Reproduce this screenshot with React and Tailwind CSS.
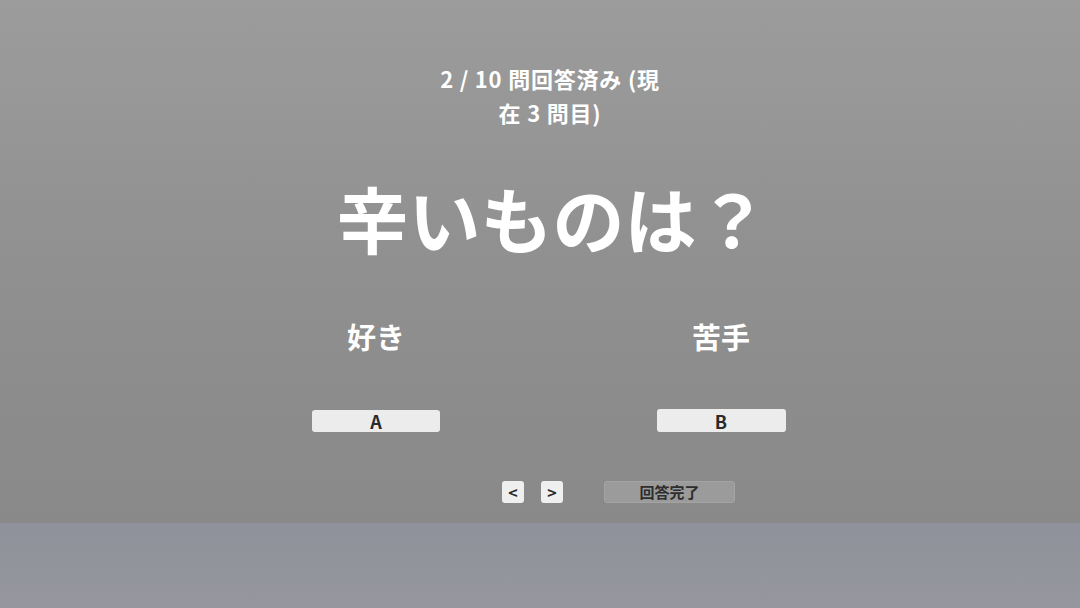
export default function App() {
  const font = { fontFamily: '"Noto Sans CJK JP", "Noto Sans", sans-serif' };
  return (
    <div className="w-[1080px] h-[608px] flex flex-col overflow-hidden" style={font}>
      <div className="h-[523px] bg-gradient-to-b from-[#9c9c9c] via-[#909090] to-[#898989] flex flex-col">
        <div className="pt-[61px] flex justify-center">
          <div className="ml-[20px] w-[234px] text-center text-white font-bold text-[22px] leading-[34px] tracking-[0.8px]">
            2 / 10 問回答済み (現在 3 問目)
          </div>
        </div>
        <div className="mt-[46px] flex justify-center">
          <div className="text-white font-bold text-[72px] leading-[84px] pl-[25px]">辛いものは？</div>
        </div>
        <div className="mt-[57px] flex pl-[306px]">
          <div className="w-[140px] flex flex-col items-center">
            <div className="text-white font-bold text-[29px] leading-[40px]">好き</div>
            <button className="mt-[54px] w-[128px] h-[22px] rounded-[3px] bg-[#ececec] text-[#2a2a2a] font-bold text-[18px] leading-[22px] flex items-center justify-center">A</button>
          </div>
          <div className="w-[140px] flex flex-col items-center ml-[205px]">
            <div className="text-white font-bold text-[29px] leading-[40px]">苦手</div>
            <button className="mt-[53px] w-[129px] h-[23px] rounded-[3px] bg-[#ececec] text-[#2a2a2a] font-bold text-[18px] leading-[22px] flex items-center justify-center">B</button>
          </div>
        </div>
        <div className="mt-[49px] flex pl-[502px] items-center">
          <button className="w-[22px] h-[22px] rounded-[3px] bg-[#efefef] text-[#2a2a2a] font-bold text-[16px] leading-[22px] flex items-center justify-center">&lt;</button>
          <button className="ml-[17px] w-[22px] h-[22px] rounded-[3px] bg-[#efefef] text-[#2a2a2a] font-bold text-[16px] leading-[22px] flex items-center justify-center">&gt;</button>
          <button className="ml-[41px] w-[131px] h-[22px] rounded-[3px] bg-[#9b9b9b] border border-[#a4a4a4] text-[#2e2e2e] font-bold text-[15px] leading-[20px] flex items-center justify-center">回答完了</button>
        </div>
      </div>
      <div className="flex-1 bg-gradient-to-b from-[#8f929b] to-[#96979d]"></div>
    </div>
  );
}
